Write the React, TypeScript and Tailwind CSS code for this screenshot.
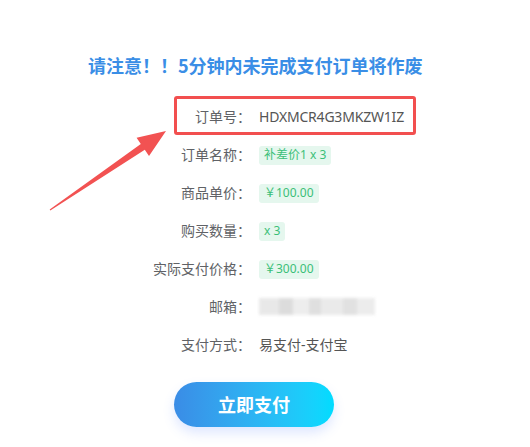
import React from "react";

const font = { fontFamily: '"Noto Sans", "Noto Sans CJK SC", sans-serif' };

function Tag({ children }: { children: React.ReactNode }) {
    return (
        <span className="inline-flex items-center h-[19px] px-[5px] rounded-[3px] bg-[#e5f7ee] text-[#3bbf78] text-[12px] leading-none">
            {children}
        </span>
    );
}

function Row({ label, children }: { label: string; children: React.ReactNode }) {
    return (
        <div className="flex items-center h-[38px]">
            <div className="w-[100px] text-right text-[14px] text-[#606266]">{label}</div>
            <div className="ml-[8px] text-[14px] text-[#555]">{children}</div>
        </div>
    );
}

export default function App() {
    return (
        <div className="relative w-[530px] h-[447px] bg-white overflow-hidden" style={font}>
            <div className="flex flex-col">
                <h2
                    className="pt-[52px] pl-[88px] text-[18px] leading-[26px] font-bold text-[#3a8ee6]"
                    style={{ fontFamily: '"Noto Sans CJK SC", "Noto Sans", sans-serif' }}
                >
                    请注意！！5分钟内未完成支付订单将作废
                </h2>

                <div className="mt-[19px] pl-[151px] flex flex-col">
                    <Row label="订单号：">
                        <span className="tracking-[-0.2px]">HDXMCR4G3MKZW1IZ</span>
                    </Row>
                    <Row label="订单名称：">
                        <Tag>补差价1 x 3</Tag>
                    </Row>
                    <Row label="商品单价：">
                        <Tag>￥100.00</Tag>
                    </Row>
                    <Row label="购买数量：">
                        <Tag>x 3</Tag>
                    </Row>
                    <Row label="实际支付价格：">
                        <Tag>￥300.00</Tag>
                    </Row>
                    <Row label="邮箱：">
                        <div className="flex w-[116px] h-[17px] blur-[1.5px] opacity-90">
                            <div className="w-[20px] bg-[#e6e6e6]" />
                            <div className="w-[14px] bg-[#d9d9d9]" />
                            <div className="w-[16px] bg-[#ececec]" />
                            <div className="w-[12px] bg-[#dcdcdc]" />
                            <div className="w-[22px] bg-[#e8e8e8]" />
                            <div className="w-[14px] bg-[#dedede]" />
                            <div className="w-[18px] bg-[#ebebeb]" />
                        </div>
                    </Row>
                    <Row label="支付方式：">易支付-支付宝</Row>
                </div>

                <button
                    type="button"
                    className="mt-[19px] ml-[174px] w-[160px] h-[45px] rounded-full bg-gradient-to-r from-[#3a8ce6] to-[#00dcff] text-white text-[18px] font-bold shadow-[0_6px_12px_rgba(80,120,255,0.18)]"
                    style={{ fontFamily: '"Noto Sans CJK SC", sans-serif' }}
                >
                    立即支付
                </button>
            </div>

            {/* annotation overlay */}
            <div className="absolute left-[174px] top-[96px] w-[242px] h-[39px] border-[3px] border-[#f24f4f] rounded-[3px] pointer-events-none" />
            <svg className="absolute left-0 top-0 pointer-events-none" width="530" height="447">
                <polygon
                    points="49.7,209.6 140.8,143.9 136.6,137.7 166,131 149,155.9 144.8,149.7 50.3,210.4"
                    fill="#f25252"
                />
            </svg>
        </div>
    );
}
